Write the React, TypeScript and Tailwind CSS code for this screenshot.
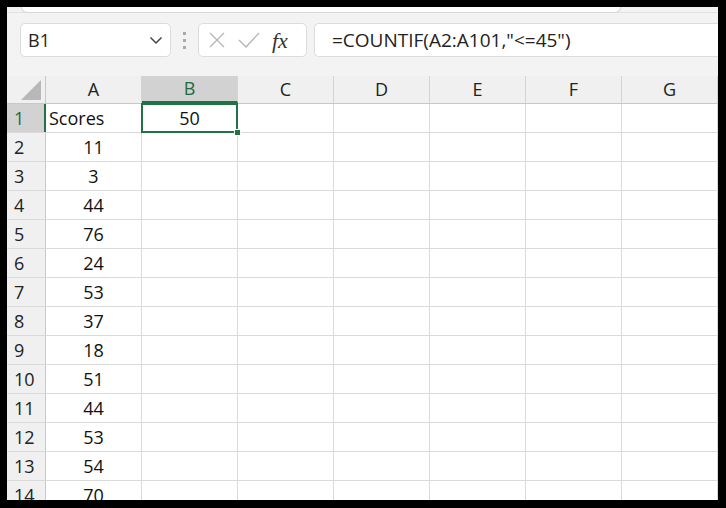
import React from "react";

const cols = ["A","B","C","D","E","F","G"];
const vals = ["Scores","11","3","44","76","24","53","37","18","51","44","53","54","70"];

export default function App() {
  return (
    <div className="w-[726px] h-[508px] bg-black pl-[7px] pt-[7px] pr-[8px] pb-[8px] overflow-hidden" style={{fontFamily:'"Segoe UI","Open Sans","Liberation Sans",sans-serif'}}>
      <div className="w-[711px] h-[493px] bg-white overflow-hidden flex flex-col">
        <div className="h-[6px] bg-[#f3f3f3] border-b border-[#e2e2e2] flex shrink-0">
          <div className="ml-[14px] w-[600px] h-[6px] bg-white rounded-b-[6px] border-b border-x border-[#d6d6d6]"></div>
        </div>
        <div className="h-[54px] bg-[#f3f3f3] flex items-center pl-[13px] shrink-0">
          <div className="w-[151px] h-[34px] bg-white border border-[#dcdcdc] rounded-[5px] flex items-center justify-between px-[7px] text-[18px] text-[#222]">
            <span>B1</span>
            <svg width="14" height="9" viewBox="0 0 14 9"><path d="M1.5 1.5 L7 7 L12.5 1.5" stroke="#444" strokeWidth="1.5" fill="none"/></svg>
          </div>
          <div className="flex flex-col gap-[4px] ml-[12px] mr-[12px]">
            <div className="w-[3px] h-[3px] bg-[#aaa]"></div><div className="w-[3px] h-[3px] bg-[#aaa]"></div><div className="w-[3px] h-[3px] bg-[#aaa]"></div>
          </div>
          <div className="w-[109px] h-[34px] bg-white border border-[#dcdcdc] rounded-[5px] flex items-center gap-[12px] px-[9px]">
            <svg width="18" height="18" viewBox="0 0 18 18"><path d="M2 2 L16 16 M16 2 L2 16" stroke="#b4b4b4" strokeWidth="1.3"/></svg>
            <svg width="22" height="16" viewBox="0 0 22 16"><path d="M1 8 L8 15 L21 1" stroke="#b4b4b4" strokeWidth="1.3" fill="none"/></svg>
            <span className="text-[22px] italic text-[#333]" style={{fontFamily:'"Liberation Serif",serif'}}>fx</span>
          </div>
          <div className="flex-1 ml-[7px] h-[34px] bg-white border border-[#dcdcdc] rounded-l-[5px] border-r-0 flex items-center px-[17px] text-[19px] text-[#222]">=COUNTIF(A2:A101,"&lt;=45")</div>
        </div>
        <div className="h-[9px] bg-[#f3f3f3] shrink-0"></div>
        <div className="flex h-[28px] bg-[#f0f0f0] border-b border-[#c8c8c8] shrink-0">
          <div className="w-[39px] relative border-r border-[#c8c8c8]">
            <svg className="absolute right-[4px] bottom-[3px]" width="20" height="20" viewBox="0 0 20 20"><path d="M20 0 L20 20 L0 20 Z" fill="#b8b8b8"/></svg>
          </div>
          {cols.map(c => (
            <div key={c} className={`w-[96px] flex items-center justify-center text-[18px] border-r border-[#d4d4d4] ${c==="B" ? "bg-[#d2d2d2] text-[#1e6b41] border-b-2 border-b-[#217346]" : "text-[#222]"}`}>{c}</div>
          ))}
        </div>
        {vals.map((v, i) => (
          <div key={i} className="flex h-[29px] border-b border-[#dadada] shrink-0">
            <div className={`w-[39px] text-[18px] pl-[7px] flex items-center border-r border-[#c8c8c8] ${i===0 ? "bg-[#d2d2d2] text-[#1e6b41] border-r-2 border-r-[#217346]" : "bg-[#f0f0f0] text-[#222]"}`}>{i+1}</div>
            {cols.map(c => (
              <div key={c} className={`w-[96px] border-r border-[#dadada] text-[18px] text-[#111] flex items-center relative ${c==="A" && i===0 ? "pl-[3px]" : "justify-center"}`}>
                {c==="A" ? v : ""}
                {c==="B" && i===0 ? (
                  <>
                    <div className="absolute inset-[-1px] border-2 border-[#217346]"></div>
                    <span>50</span>
                    <div className="absolute right-[-4px] bottom-[-4px] w-[7px] h-[7px] bg-[#217346] border border-white z-10"></div>
                  </>
                ) : null}
              </div>
            ))}
          </div>
        ))}
      </div>
    </div>
  );
}
